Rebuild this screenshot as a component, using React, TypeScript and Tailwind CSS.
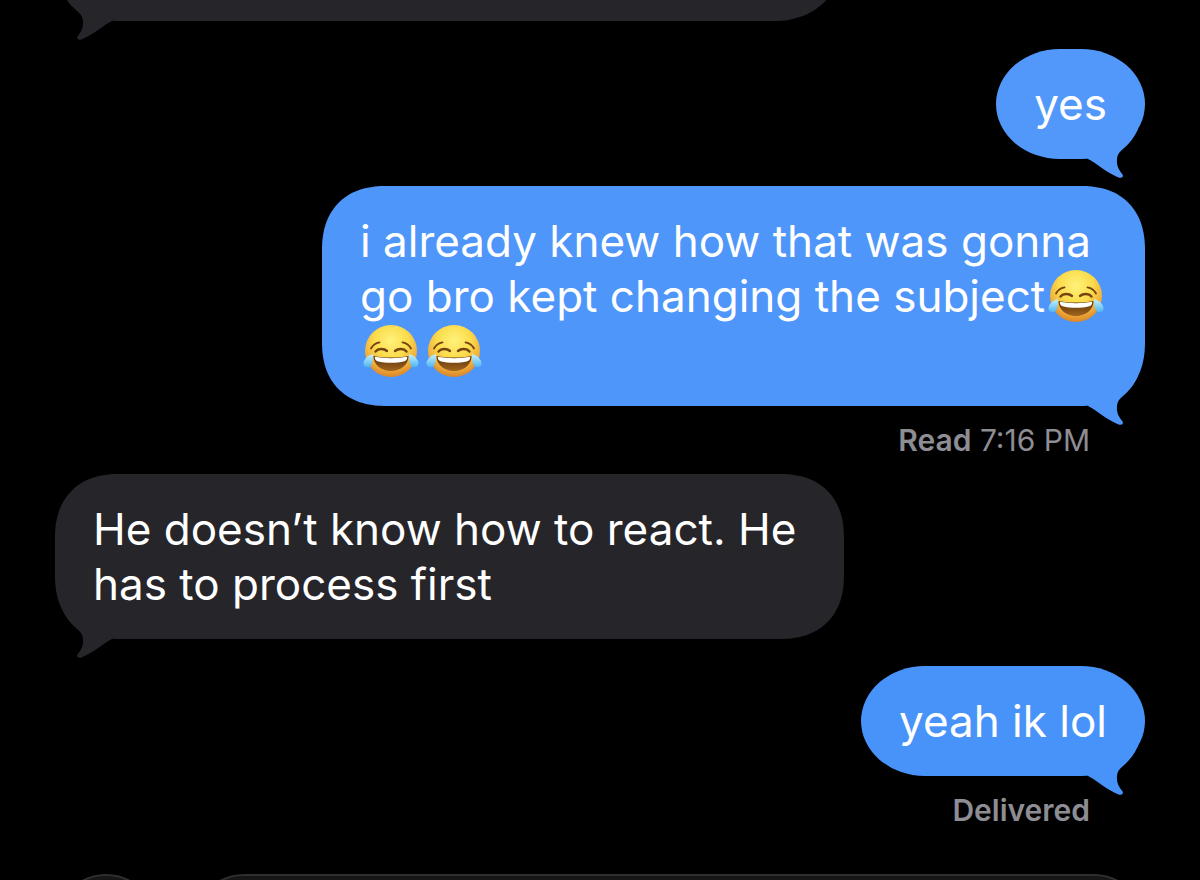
import classNames from "clsx";
import { ReactNode } from "react";

const LaughingEmoji = () => (
  <svg
    role="img"
    aria-label="face with tears of joy"
    viewBox="0 0 58 54"
    className="mr-[3px] ml-[2px] inline-block h-[54px] w-[58px] align-top"
  >
    <defs>
      <radialGradient id="face" cx="0.5" cy="0.3" r="0.72">
        <stop offset="0" stopColor="#fff27a" />
        <stop offset="0.45" stopColor="#fbdc4c" />
        <stop offset="0.75" stopColor="#f0b03c" />
        <stop offset="1" stopColor="#d97f26" />
      </radialGradient>
      <linearGradient id="mouth" x1="0" y1="0" x2="0" y2="1">
        <stop offset="0" stopColor="#5a2f08" />
        <stop offset="1" stopColor="#a0661c" />
      </linearGradient>
      <linearGradient id="tear" x1="0" y1="0" x2="0" y2="1">
        <stop offset="0" stopColor="#c9f1fb" />
        <stop offset="1" stopColor="#4cb4f2" />
      </linearGradient>
    </defs>
    <circle cx="29" cy="27" r="26" fill="url(#face)" />
    <g fill="none" stroke="#75430f" strokeLinecap="round">
      <path d="M9 24.5C10.5 21.5 13.5 19 17.5 18.3" strokeWidth="1.8" />
      <path d="M49 24.5C47.5 21.5 44.5 19 40.5 18.3" strokeWidth="1.8" />
      <path d="M13.5 27.5C16 24.3 22 24.3 25 27" strokeWidth="2.4" />
      <path d="M44.5 27.5C42 24.3 36 24.3 33 27" strokeWidth="2.4" />
    </g>
    <path
      d="M11.5 32C22 34 36 34 46.5 32C46.5 40.5 39 47 29 47C19 47 11.5 40.5 11.5 32Z"
      fill="url(#mouth)"
    />
    <path
      d="M12.8 32.8C22 34.6 36 34.6 45.2 32.8C45.4 35 44.6 36.6 42.5 37.2C34 39.4 24 39.4 15.5 37.2C13.4 36.6 12.6 35 12.8 32.8Z"
      fill="#fff"
    />
    <path
      d="M11 30C5.5 31.5 1.5 35.5 1.5 39.5C1.5 44 8 44.8 9.6 40.5C10.8 37.3 11.3 33 11 30Z"
      fill="url(#tear)"
    />
    <path
      d="M47 30C52.5 31.5 56.5 35.5 56.5 39.5C56.5 44 50 44.8 48.4 40.5C47.2 37.3 46.7 33 47 30Z"
      fill="url(#tear)"
    />
  </svg>
);

interface BubbleProps {
  sent?: boolean;
  className?: string;
  children?: ReactNode;
}

const Bubble = ({ sent, className, children }: BubbleProps) => (
  <div
    className={classNames(
      "relative min-h-[110px] px-[38px] pt-[28px] pb-[27px] text-[44px] leading-[55px] whitespace-nowrap",
      sent ? "self-end" : "self-start bg-[#26252a] text-[#26252a]",
      className
    )}
  >
    <svg
      aria-hidden="true"
      viewBox="0 0 60 60"
      className={classNames(
        "absolute -bottom-[20px] size-[60px]",
        sent ? "right-0" : "left-0 -scale-x-100"
      )}
    >
      <path
        d="M3 40C10 43 22 54 33 58.2C36 59.4 38.8 58.6 37.6 55.5C33 50 31.5 46 32 40C32.5 35 35 32.5 38 30C44 25 49 19 53 10L10 10Z"
        fill="currentColor"
      />
    </svg>
    <div className="relative text-white">{children}</div>
  </div>
);

const Status = ({ children }: { children: ReactNode }) => (
  <p className="mt-[18px] mr-[55px] self-end text-[30px] leading-[32px] text-[#8d8d93]">
    {children}
  </p>
);

const App = () => (
  <main className="flex h-screen flex-col overflow-hidden bg-black px-[55px] font-['Inter','Liberation_Sans',sans-serif]">
    <section className="flex flex-col">
      <Bubble className="-mt-[89px] w-[72%] rounded-[64px/55px]" />
      <Bubble
        sent
        className="mt-[28px] rounded-[64px/55px] bg-[#5298fa] text-[#5298fa]"
      >
        yes
      </Bubble>
      <Bubble
        sent
        className="mt-[27px] w-[75.5%] rounded-[64px] bg-[#4e96fa] text-[#4e96fa] [corner-shape:superellipse(1.2)]"
      >
        i already knew how that was gonna
        <br />
        go bro kept changing the subject
        <LaughingEmoji />
        <br />
        <LaughingEmoji />
        <LaughingEmoji />
      </Bubble>
      <Status>
        <span className="font-semibold">Read</span> 7:16 PM
      </Status>
      <Bubble className="mt-[18px] w-[72.4%] rounded-[64px] [corner-shape:superellipse(1.2)]">
        He doesn’t know how to react. He
        <br />
        has to process first
      </Bubble>
      <Bubble
        sent
        className="mt-[27px] rounded-[64px/55px] bg-[#4893f9] text-[#4893f9]"
      >
        yeah ik lol
      </Bubble>
      <Status>
        <span className="font-semibold">Delivered</span>
      </Status>
    </section>
    <form className="mt-[48px] flex gap-[36px]">
      <button
        type="button"
        aria-label="Add attachment"
        className="size-[102px] shrink-0 rounded-full border-2 border-[#2f2f31] bg-[#161617]"
      />
      <input
        aria-label="Message"
        className="h-[102px] min-w-0 flex-1 rounded-full border-2 border-[#2f2f31] bg-[#161617] px-10 text-[44px] text-white"
      />
    </form>
  </main>
);

export default App;
